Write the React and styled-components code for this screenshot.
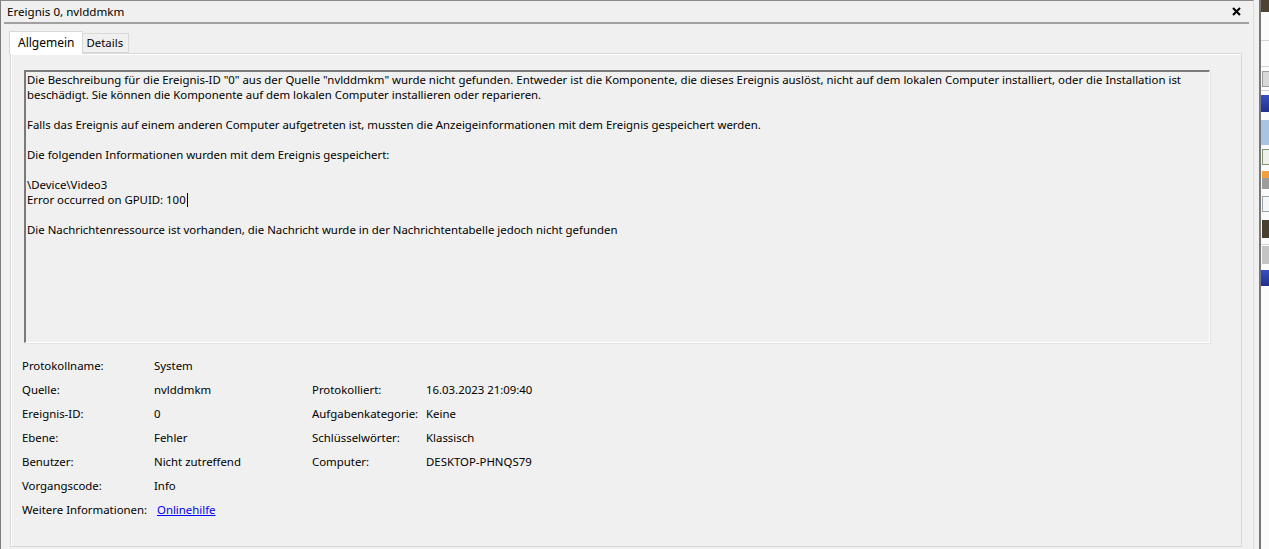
import React from "react";
import styled, { createGlobalStyle } from "styled-components";

const GlobalStyle = createGlobalStyle`
  html, body {
    margin: 0;
    padding: 0;
    background: #f0f0f0;
  }
  body {
    font-family: "Noto Sans", "Open Sans", sans-serif;
    font-size: 11.4px;
    color: #000;
  }
`;

const Screen = styled.div`
  display: flex;
  width: 1269px;
  height: 549px;
  overflow: hidden;
  background: #f0f0f0;
`;

const Dialog = styled.div`
  box-sizing: border-box;
  width: 1254px;
  height: 549px;
  display: flex;
  flex-direction: column;
  border-left: 1px solid #7d7d7d;
  border-top: 1px solid #8a8a8a;
  border-right: 1px solid #dcdcdc;
`;

const TitleBar = styled.div`
  height: 21px;
  display: flex;
  align-items: center;
  justify-content: space-between;
  padding: 0 12px 1px 6px;
  box-sizing: border-box;
  font-size: 11.6px;
`;

const Separator = styled.div`
  height: 2px;
  margin: 0 4px 0 3px;
  background: #a0a0a0;
`;

const Body = styled.div`
  flex: 1;
  display: flex;
  flex-direction: column;
  padding: 7px 11px 2px 8px;
`;

const TabRow = styled.div`
  display: flex;
  align-items: flex-end;
  height: 22px;
  position: relative;
  z-index: 1;
`;

const Tab = styled.div`
  box-sizing: border-box;
  height: ${(p) => (p.$active ? "23px" : "20px")};
  padding: ${(p) => (p.$active ? "0 7px 2px 8px" : "0 5px 1px 4px")};
  margin-bottom: ${(p) => (p.$active ? "-1px" : "0")};
  margin-left: ${(p) => (p.$active ? "0" : "-1px")};
  display: flex;
  align-items: center;
  background: ${(p) => (p.$active ? "#ffffff" : "#f0f0f0")};
  border: 1px solid #d9d9d9;
  border-bottom: ${(p) => (p.$active ? "none" : "1px solid #d9d9d9")};
  font-size: ${(p) => (p.$active ? "12px" : "11.4px")};
`;

const Panel = styled.div`
  flex: 1;
  margin-left: 1px;
  border: 1px solid #d9d9d9;
  box-shadow: inset 1px 1px 0 #ffffff;
  padding: 16px 31px 0 13px;
`;

const TextBox = styled.div`
  box-sizing: border-box;
  width: 1186px;
  height: 273px;
  border-style: solid;
  border-width: 2px 1px 1px 2px;
  border-color: #7a7a7a #ffffff #ffffff #7a7a7a;
  box-shadow: 1px 1px 0 #e3e3e3;
  padding: 0 1px;
  line-height: 15px;
  white-space: nowrap;
`;

const Para = styled.p`
  margin: 0 0 15px;
`;

const Caret = styled.span`
  display: inline-block;
  width: 1px;
  height: 14px;
  margin-left: 1px;
  vertical-align: -3px;
  background: #000;
`;

const InfoGrid = styled.div`
  display: grid;
  grid-template-columns: 132px 158px 114px auto;
  grid-auto-rows: 24px;
  align-items: center;
  margin: 10px 0 0 -2px;
`;

const Cell = styled.div`
  white-space: nowrap;
  padding-left: ${(p) => (p.$link ? "3px" : "0")};
`;

const HelpLink = styled.a`
  color: #0000ff;
  text-decoration: underline;
  cursor: pointer;
`;

const Gap = styled.div`
  width: 5px;
`;

const DarkRule = styled.div`
  width: 2px;
  background: #767676;
`;

const Strip = styled.div`
  width: 8px;
  background: #fbfbfb;
  display: flex;
  flex-direction: column;
`;

const StripItem = styled.div`
  box-sizing: border-box;
  height: ${(p) => p.$h}px;
  margin-top: ${(p) => p.$gap}px;
  margin-left: ${(p) => (p.$inset ? 1 : 0)}px;
  background: ${(p) => p.$bg};
  border: ${(p) => (p.$outline ? `1px solid ${p.$outline}` : "none")};
  border-right: none;
`;

const CloseIcon = () => (
  <svg width="9" height="9" viewBox="0 0 9 9">
    <path d="M1 1 L8 8 M8 1 L1 8" stroke="#000" strokeWidth="2" />
  </svg>
);

const stripItems = [
  { h: 12, gap: 0, bg: "#4d4233" },
  { h: 1, gap: 28, bg: "#d4d4d4" },
  { h: 1, gap: 25, bg: "#d4d4d4" },
  { h: 16, gap: 4, bg: "#d8d8d8", outline: "#9b9b9b", inset: true },
  { h: 1, gap: 3, bg: "#d4d4d4" },
  { h: 17, gap: 4, bg: "linear-gradient(180deg,#3850c0,#22308a)" },
  { h: 25, gap: 8, bg: "#a8c4e2" },
  { h: 16, gap: 4, bg: "#eef0ea", outline: "#7f9470", inset: true },
  { h: 18, gap: 6, bg: "linear-gradient(180deg,#f0a040 0 40%,#9c9c9c 40%)", inset: true },
  { h: 16, gap: 7, bg: "#f4f6f8", outline: "#98a0a8", inset: true },
  { h: 18, gap: 8, bg: "#4a402f", inset: true },
  { h: 1, gap: 6, bg: "#d4d4d4" },
  { h: 18, gap: 1, bg: "#c4c4c4", inset: true },
  { h: 16, gap: 6, bg: "linear-gradient(180deg,#3850c0,#22308a)" },
];

const rows = [
  ["Protokollname:", "System", "", ""],
  ["Quelle:", "nvlddmkm", "Protokolliert:", "16.03.2023 21:09:40"],
  ["Ereignis-ID:", "0", "Aufgabenkategorie:", "Keine"],
  ["Ebene:", "Fehler", "Schlüsselwörter:", "Klassisch"],
  ["Benutzer:", "Nicht zutreffend", "Computer:", "DESKTOP-PHNQS79"],
  ["Vorgangscode:", "Info", "", ""],
];

export default function App() {
  return (
    <>
      <GlobalStyle />
      <Screen>
        <Dialog>
          <TitleBar>
            <span>Ereignis 0, nvlddmkm</span>
            <CloseIcon />
          </TitleBar>
          <Separator />
          <Body>
            <TabRow>
              <Tab $active>Allgemein</Tab>
              <Tab>Details</Tab>
            </TabRow>
            <Panel>
              <TextBox>
                <Para>
                  Die Beschreibung für die Ereignis-ID "0" aus der Quelle "nvlddmkm" wurde nicht gefunden. Entweder ist die Komponente, die dieses Ereignis auslöst, nicht auf dem lokalen Computer installiert, oder die Installation ist
                  <br />
                  beschädigt. Sie können die Komponente auf dem lokalen Computer installieren oder reparieren.
                </Para>
                <Para>
                  Falls das Ereignis auf einem anderen Computer aufgetreten ist, mussten die Anzeigeinformationen mit dem Ereignis gespeichert werden.
                </Para>
                <Para>Die folgenden Informationen wurden mit dem Ereignis gespeichert:</Para>
                <Para>
                  \Device\Video3
                  <br />
                  Error occurred on GPUID: 100
                  <Caret />
                </Para>
                <Para>
                  Die Nachrichtenressource ist vorhanden, die Nachricht wurde in der Nachrichtentabelle jedoch nicht gefunden
                </Para>
              </TextBox>
              <InfoGrid>
                {rows.map((r) =>
                  r.map((c, i) => <Cell key={r[0] + i}>{c}</Cell>)
                )}
                <Cell>Weitere Informationen:</Cell>
                <Cell $link>
                  <HelpLink>Onlinehilfe</HelpLink>
                </Cell>
              </InfoGrid>
            </Panel>
          </Body>
        </Dialog>
        <Gap />
        <DarkRule />
        <Strip>
          {stripItems.map((s, i) => (
            <StripItem
              key={i}
              $h={s.h}
              $gap={s.gap}
              $bg={s.bg}
              $outline={s.outline}
              $inset={s.inset}
            />
          ))}
        </Strip>
      </Screen>
    </>
  );
}
